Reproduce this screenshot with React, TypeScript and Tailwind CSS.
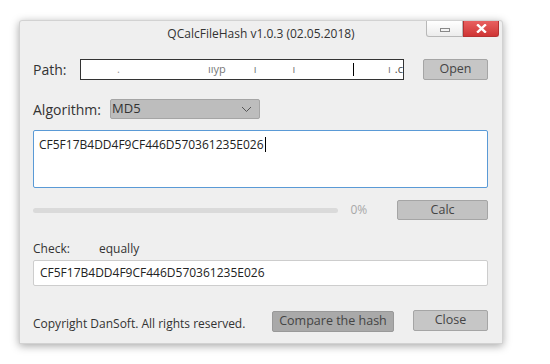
import React from 'react';

const font = { fontFamily: '"Open Sans", "Noto Sans", sans-serif' };

function WinButtons() {
  return (
    <div className="absolute right-[3px] top-0 flex">
      <div className="flex h-[16px] w-[37px] items-center justify-center rounded-bl-[3px] border border-t-0 border-[#b8b8b8] bg-gradient-to-b from-[#ffffff] to-[#ececec]">
        <div className="mt-[3px] h-[4px] w-[10px] border border-[#888] bg-[#f4f4f4]" />
      </div>
      <div className="flex h-[16px] w-[36px] items-center justify-center rounded-br-[3px] border border-t-0 border-[#b53232] bg-gradient-to-b from-[#e86060] to-[#cf3434]">
        <svg width="11" height="9" viewBox="0 0 11 9">
          <path d="M2 1.2 L9 7.8 M9 1.2 L2 7.8" stroke="#ffffff" strokeWidth="2.4" strokeLinecap="square" />
        </svg>
      </div>
    </div>
  );
}

function Btn({ label, className }: { label: string; className: string }) {
  return (
    <div className={`flex items-center justify-center whitespace-nowrap rounded-[2px] border text-[12.5px] text-[#444] ${className}`}>
      {label}
    </div>
  );
}

export default function App() {
  return (
    <div className="h-[364px] w-[550px] bg-white pl-[19px] pt-[20px]" style={font}>
      <div className="relative h-[324px] w-[484px] rounded-t-[3px] border border-[#d2d2d2] bg-[#efefef] shadow-[0_2px_9px_rgba(0,0,0,0.35)]">
        <div className="flex h-[25px] items-center justify-center text-[12px] text-[#333]">
          QCalcFileHash v1.0.3 (02.05.2018)
        </div>
        <WinButtons />

        <div className="pl-[13px] pr-[14px]">
          {/* path */}
          <div className="mt-[13px] flex h-[21px] items-center">
            <span className="w-[47px] text-[14px] text-[#333]">Path:</span>
            <div className="flex h-[21px] w-[324px] items-center overflow-hidden whitespace-nowrap border border-[#333] bg-white text-[11px] text-[#555]">
              <span className="ml-[36px] text-[#999]">.</span>
              <span className="ml-[88px] text-[#777]">ııyp</span>
              <span className="ml-[28px] text-[#777]">ı</span>
              <span className="ml-[36px] text-[#777]">ı</span>
              <span className="ml-[58px] h-[13px] w-[1px] bg-black" />
              <span className="ml-[34px] text-[#777]">ı</span>
              <span className="ml-[4px] text-[#444]">.c</span>
            </div>
            <Btn label="Open" className="ml-[19px] h-[21px] w-[65px] border-[#a5a5a5] bg-[#c6c6c6]" />
          </div>

          {/* algorithm */}
          <div className="mt-[19px] flex h-[20px] items-center">
            <span className="w-[77px] text-[14px] text-[#333]">Algorithm:</span>
            <div className="flex h-[20px] w-[150px] items-center justify-between rounded-[2px] border border-[#a5a5a5] bg-[#bdbdbd] pl-[1px] pr-[7px] text-[13px] text-[#333]">
              <span>MD5</span>
              <svg width="11" height="7" viewBox="0 0 11 7">
                <path d="M1 1 L5.5 5.5 L10 1" fill="none" stroke="#555" strokeWidth="1" />
              </svg>
            </div>
          </div>

          {/* result */}
          <div className="mt-[11px] h-[58px] w-[455px] rounded-[2px] border border-[#5a9ad6] bg-white px-[5px] pt-[3px] text-[12px] text-[#222]">
            <span>CF5F17B4DD4F9CF446D570361235E026</span>
            <span className="ml-[1px] inline-block h-[15px] w-[1px] translate-y-[3px] bg-black" />
          </div>

          {/* progress */}
          <div className="mt-[12px] flex h-[20px] items-center">
            <div className="h-[5px] w-[313px] rounded-full bg-[#dadada]" />
            <span className="ml-[12px] w-[48px] text-[12px] text-[#a8a8a8]">0%</span>
            <Btn label="Calc" className="h-[20px] w-[93px] border-[#a5a5a5] bg-[#c2c2c2]" />
          </div>

          {/* check */}
          <div className="mt-[21px] flex h-[16px] items-center text-[12px] text-[#333]">
            <span className="w-[66px]">Check:</span>
            <span>equally</span>
          </div>
          <div className="mt-[3px] flex h-[26px] w-[455px] items-center rounded-[2px] border border-[#cdcdcd] bg-white pl-[6px] text-[12px] text-[#222]">
            CF5F17B4DD4F9CF446D570361235E026
          </div>

          {/* bottom */}
          <div className="mt-[24px] flex h-[22px] items-center">
            <span className="mt-[6px] w-[239px] text-[12px] text-[#333]">Copyright DanSoft. All rights reserved.</span>
            <Btn label="Compare the hash" className="h-[21px] w-[122px] border-[#999] bg-[#a9a9a9]" />
            <Btn label="Close" className="ml-[19px] -mt-[2px] h-[21px] w-[75px] border-[#a5a5a5] bg-[#c6c6c6]" />
          </div>
        </div>
      </div>
    </div>
  );
}
